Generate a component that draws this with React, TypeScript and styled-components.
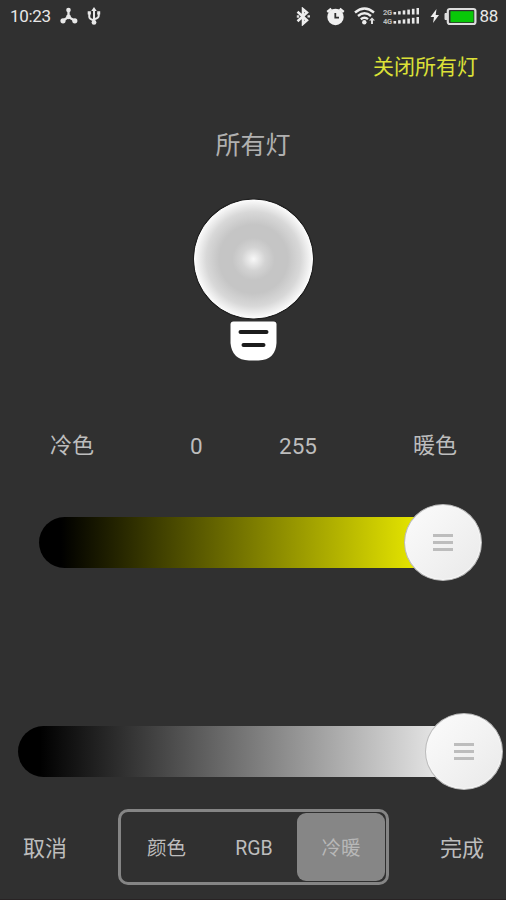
import React from "react";
import styled, { createGlobalStyle } from "styled-components";

const GlobalStyle = createGlobalStyle`
  * { box-sizing: border-box; }
  body { margin: 0; background: #303030; }
`;

const Screen = styled.main`
  width: 506px;
  height: 900px;
  display: flex;
  flex-direction: column;
  overflow: hidden;
  background: #303030;
  color: #bdbdbd;
  font-family: Roboto, "Noto Sans CJK SC", sans-serif;
  border-bottom: 1px solid #282324;
`;

const StatusBar = styled.header`
  height: 32px;
  flex: none;
  display: flex;
  align-items: center;
  justify-content: space-between;
  padding: 0 8px 0 10px;
  color: #e8e8e8;
  font-size: 17px;
  line-height: 32px;
  letter-spacing: -0.3px;
`;

const StatusGroup = styled.div`
  display: flex;
  align-items: center;
  height: 32px;
`;

const Icon = styled.svg<{ $before?: number }>`
  display: block;
  flex: none;
  margin-left: ${(p) => p.$before ?? 0}px;
`;

const Level = styled.span`
  margin-left: 2px;
`;

const Actions = styled.div`
  height: 70px;
  flex: none;
  display: flex;
  justify-content: flex-end;
  align-items: center;
  padding-right: 28px;
`;

const TextButton = styled.button<{ $size: number; $color?: string }>`
  border: 0;
  padding: 0;
  background: none;
  font: inherit;
  white-space: nowrap;
  font-size: ${(p) => p.$size}px;
  line-height: 32px;
  color: ${(p) => p.$color ?? "#bdbdbd"};
`;

const Title = styled.h1`
  margin: 26px 0 0;
  height: 36px;
  flex: none;
  text-align: center;
  font-weight: 400;
  font-size: 25px;
  line-height: 36px;
  color: #b0b0b0;
`;

const Bulb = styled.svg`
  display: block;
  flex: none;
  align-self: center;
  margin-top: 32px;
`;

const Labels = styled.div`
  display: grid;
  grid-template-columns: 140px 89px 134px 44px;
  height: 32px;
  flex: none;
  margin: 68px 0 0 50px;
  font-size: 22px;
  line-height: 32px;
`;

const Reading = styled.span`
  font-size: 22.5px;
`;

const Slider = styled.div<{ $top: number; $left: number; $right: number }>`
  height: 77px;
  flex: none;
  display: flex;
  align-items: center;
  margin: ${(p) => p.$top}px ${(p) => p.$right}px 0 ${(p) => p.$left}px;
`;

const Track = styled.div<{ $end: string }>`
  flex: 1;
  height: 51px;
  margin-right: -38px;
  border-radius: 26px 0 0 26px;
  background: linear-gradient(90deg, #000 22px, ${(p) => p.$end} 100%);
`;

const Thumb = styled.div`
  width: 78px;
  height: 77px;
  flex: none;
  display: flex;
  flex-direction: column;
  align-items: center;
  justify-content: center;
  gap: 4px;
  border-radius: 50%;
  border: 1px solid #bcbcbc;
  background: linear-gradient(135deg, #fafafa 10%, #ebebeb 90%);
  box-shadow: inset 0 0 0 1px #f8f8f8;
  z-index: 1;
`;

const Grip = styled.i`
  width: 20px;
  height: 3px;
  background: #bdbdbd;
`;

const Footer = styled.footer`
  height: 76px;
  flex: none;
  display: flex;
  align-items: center;
  justify-content: space-between;
  margin-top: 19px;
  padding: 0 22px 0 23px;
`;

const Segments = styled.div`
  width: 271px;
  height: 76px;
  display: grid;
  grid-template-columns: 89px 86px 88px;
  padding: 1px;
  border: 3px solid #858585;
  border-radius: 10px;
`;

const Segment = styled.button<{ $active?: boolean }>`
  border: 0;
  padding: 3px 0 0;
  font: inherit;
  font-size: 19.5px;
  line-height: 65px;
  border-radius: 9px;
  color: ${(p) => (p.$active ? "#b8b8b8" : "#bdbdbd")};
  background: ${(p) => (p.$active ? "#868686" : "transparent")};
`;

const FooterAction = styled(TextButton)`
  padding-top: 3px;
`;

const Knob = () => (
  <Thumb>
    <Grip />
    <Grip />
    <Grip />
  </Thumb>
);

const bars = [0, 1, 2, 3, 4, 5];

export default function App() {
  return (
    <>
      <GlobalStyle />
      <Screen>
        <StatusBar>
          <StatusGroup>
            <span>10:23</span>
            <Icon $before={9} width="18" height="18" viewBox="0 0 18 18">
              <path d="M8.5 3v7L3 13.5M8.5 10l6 3.5" fill="none" stroke="#e8e8e8" strokeWidth="2.3" />
              <g fill="#e8e8e8">
                <circle cx="8.5" cy="3" r="2.3" />
                <circle cx="3" cy="13.8" r="2.6" />
                <circle cx="14.8" cy="13.8" r="2.6" />
                <circle cx="8.5" cy="9.8" r="2.4" />
              </g>
            </Icon>
            <Icon $before={9} width="14" height="18" viewBox="0 0 14 18">
              <path d="M7 2v14M2.3 6v4q0 2 4.7 3.2M11.7 6v3q0 2-4.7 3.2" fill="none" stroke="#e8e8e8" strokeWidth="2" />
              <path d="M7 0l2.7 4H4.3zM.7 4.2h3.2v3.2H.7zM10.2 4.2h3v3.2h-3z" fill="#e8e8e8" />
              <circle cx="7" cy="15.4" r="2.4" fill="#e8e8e8" />
            </Icon>
          </StatusGroup>
          <StatusGroup>
            <Icon width="15" height="19" viewBox="0 0 15 19">
              <path d="M1.5 4.8l9.5 8.5-4 3.5V2.2l4 3.4-9.5 8.6" fill="none" stroke="#eee" strokeWidth="2.5" />
              <path d="M11.5 8.2H14v2.4h-2.5zM.8 8.3h2.4v2.4H.8z" fill="#ddd" />
            </Icon>
            <Icon $before={15} width="19" height="19" viewBox="0 0 19 19">
              <circle cx="9.5" cy="10" r="8.2" fill="#f0f0f0" />
              <path d="M1.3 5l4-3.3M17.7 5l-4-3.3" stroke="#f0f0f0" strokeWidth="2.5" />
              <path d="M9.3 6v4.6H13" fill="none" stroke="#303030" strokeWidth="1.8" />
            </Icon>
            <Icon $before={9} width="22" height="20" viewBox="0 0 22 20">
              <path d="M1 6.5q9.5-8 19 0M4 10q6.5-5.5 13 0M6.8 13.2q3.7-3 7.2 0" fill="none" stroke="#eee" strokeWidth="2.4" />
              <circle cx="10.3" cy="16.3" r="2.2" fill="#eee" />
              <path d="M15 14.5l3-3 3 3h-2V18h-2v-3.5z" fill="#ddd" />
            </Icon>
            <Icon $before={7} width="36" height="18" viewBox="0 0 36 18">
              <g fill="#bdbdbd" fontFamily="Roboto, sans-serif" fontSize="7.5" fontWeight="700" letterSpacing="-0.3">
                <text x="0" y="7.8">2G</text>
                <text x="0" y="17">4G</text>
              </g>
              <g fill="#e8e8e8">
                {bars.map((i) => (
                  <React.Fragment key={i}>
                    <rect x={10.5 + i * 4.6} y={5 - i * 0.8} width="2.6" height={2.5 + i * 0.8} />
                    <rect x={10.5 + i * 4.6} y={14 - i * 0.8} width="2.6" height={2.6 + i * 0.8} />
                  </React.Fragment>
                ))}
              </g>
            </Icon>
            <Icon $before={11} width="10" height="14" viewBox="0 0 10 14">
              <path d="M6.5 0L.5 8H4l-1 6 6-8H5.7z" fill="#eee" />
            </Icon>
            <Icon $before={4} width="33" height="19" viewBox="0 0 33 19">
              <rect x="3.8" y="2" width="27.6" height="15" rx="2" fill="#303030" stroke="#ddd" strokeWidth="2.2" />
              <path d="M3 6.5H1v6h2" fill="#ddd" stroke="#ddd" />
              <path d="M6.5 4.2h23v11h-23z" fill="#08c808" />
            </Icon>
            <Level>88</Level>
          </StatusGroup>
        </StatusBar>

        <Actions>
          <TextButton $size={21} $color="#dce137">关闭所有灯</TextButton>
        </Actions>

        <Title>所有灯</Title>

        <Bulb width="122" height="166" viewBox="0 0 122 166">
          <defs>
            <radialGradient id="glow">
              <stop offset="0" stopColor="#f8f8f8" />
              <stop offset="0.08" stopColor="#e9e9e9" />
              <stop offset="0.2" stopColor="#d3d3d3" />
              <stop offset="0.36" stopColor="#c5c5c5" />
              <stop offset="0.58" stopColor="#c5c5c5" />
              <stop offset="0.8" stopColor="#d8d8d8" />
              <stop offset="1" stopColor="#fbfbfb" />
            </radialGradient>
          </defs>
          <circle cx="61.5" cy="63" r="60.5" fill="#202020" />
          <circle cx="61.5" cy="63" r="59" fill="url(#glow)" stroke="#fff" strokeWidth="1" />
          <path d="M41.5 125.5h40q3 0 3 3V147q-1 17-18 17.5H57q-17-.5-18.5-17.5v-18.5q0-3 3-3z" fill="#fff" />
          <path d="M48.5 136h26M51.5 149h20" stroke="#1c1c1c" strokeWidth="4" strokeLinecap="round" />
        </Bulb>

        <Labels>
          <span>冷色</span>
          <Reading>0</Reading>
          <Reading>255</Reading>
          <span>暖色</span>
        </Labels>

        <Slider $top={42} $left={39} $right={24}>
          <Track $end="#f6f600" />
          <Knob />
        </Slider>
        <Slider $top={132} $left={18} $right={3}>
          <Track $end="#f4f4f4" />
          <Knob />
        </Slider>

        <Footer>
          <FooterAction $size={22}>取消</FooterAction>
          <Segments>
            <Segment>颜色</Segment>
            <Segment>RGB</Segment>
            <Segment $active>冷暖</Segment>
          </Segments>
          <FooterAction $size={22}>完成</FooterAction>
        </Footer>
      </Screen>
    </>
  );
}
